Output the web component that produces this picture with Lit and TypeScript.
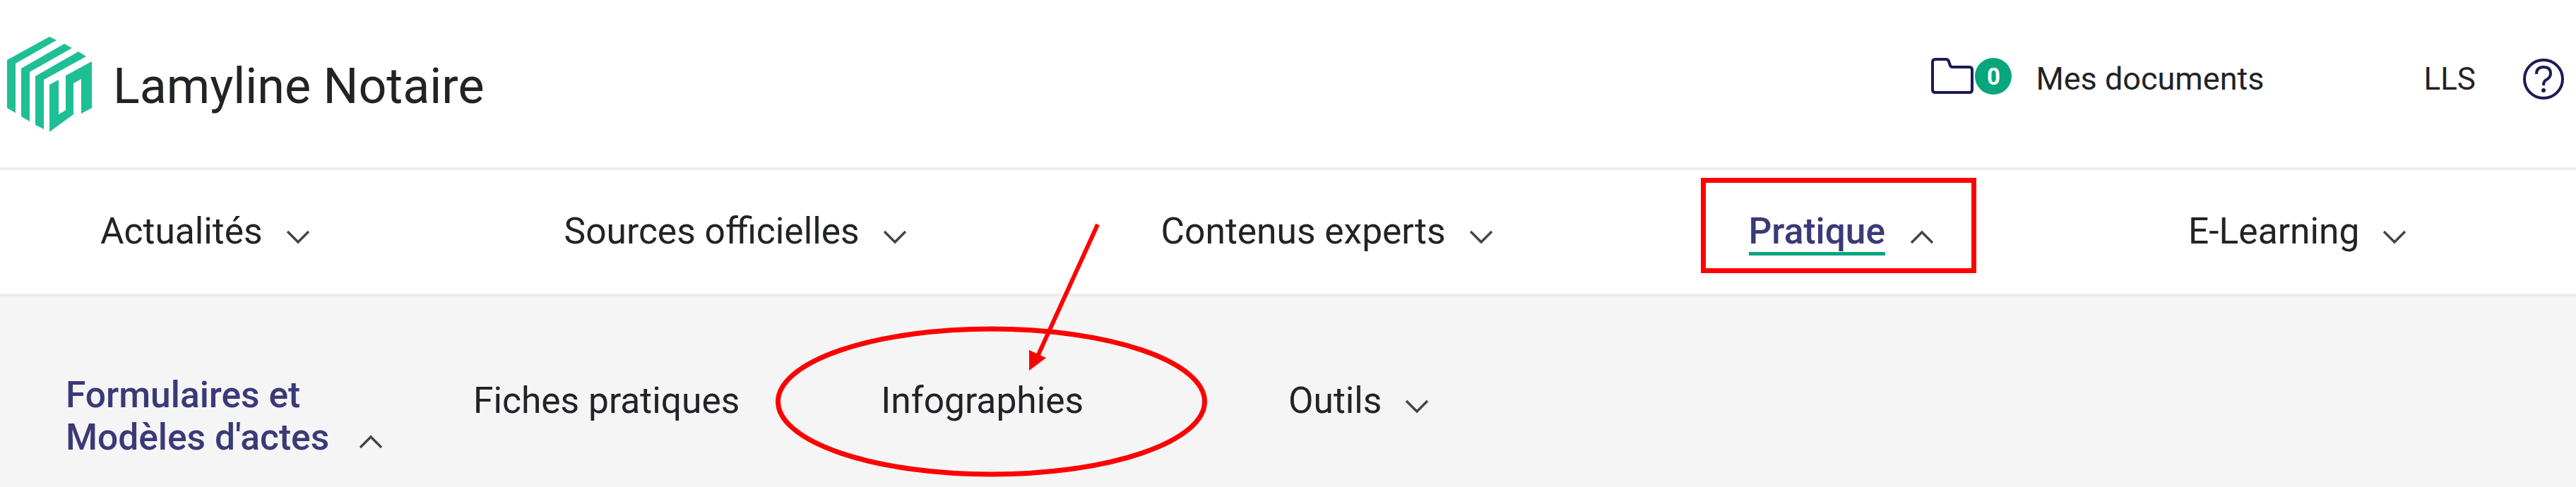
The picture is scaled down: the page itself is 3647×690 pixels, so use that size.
import { LitElement, html, css, svg } from "lit";
import { customElement } from "lit/decorators.js";

const chevron = (up: boolean) => html`<svg class="chev" viewBox="0 0 34 20" aria-hidden="true">
  <path d=${up ? "M2 18 L17 3 L32 18" : "M2 2 L17 17 L32 2"} fill="none" stroke="#444" stroke-width="3.4" />
</svg>`;

const navItems = [
  { label: "Actualités", up: false, active: false },
  { label: "Sources officielles", up: false, active: false },
  { label: "Contenus experts", up: false, active: false },
  { label: "Pratique", up: true, active: true },
  { label: "E-Learning", up: false, active: false },
];

@customElement("app-root")
export class AppRoot extends LitElement {
  static styles = css`
    :host {
      display: block;
      position: relative;
      width: 3647px;
      height: 690px;
      overflow: hidden;
      background: #fff;
      font-family: Roboto, "Liberation Sans", sans-serif;
      color: #222326;
    }
    .top {
      height: 241px;
      box-sizing: border-box;
      display: flex;
      align-items: flex-start;
      border-bottom: 4px solid #eeeeee;
    }
    .logo { display: block; width: 120px; height: 135px; margin: 52px 0 0 10px; flex: none; }
    .brand { font-size: 70px; line-height: 82px; margin: 81px 0 0 30px; }
    .tools { margin-left: auto; display: flex; align-items: flex-start; padding-top: 82px; }
    .folder { display: block; width: 62px; height: 52px; flex: none; }
    .badge {
      width: 52px; height: 52px; border-radius: 50%; background: #07a67c; color: #fff;
      font-size: 33px; font-weight: 700; display: flex; align-items: center; justify-content: center; margin-left: 1px;
    }
    .docs { font-size: 45px; line-height: 52px; margin: 4px 0 0 34px; white-space: nowrap; }
    .user { font-size: 44px; line-height: 52px; margin: 4px 0 0 226px; }
    .help { display: block; width: 60px; height: 60px; margin: 0 16px 0 66px; }
    .nav {
      height: 179px; box-sizing: border-box; border-bottom: 4px solid #ececec;
      display: flex; align-items: flex-start; padding: 57px 0 0 142px; gap: 360px;
    }
    .item { display: flex; align-items: flex-start; font-size: 51.5px; line-height: 60px; flex: none; }
    .label { display: block; white-space: nowrap; }
    .item.active { margin-left: 2px; }
    .item.active .label { color: #3a3a78; font-weight: 500; border-bottom: 5px solid #07a67c; height: 59px; }
    .chev { display: block; width: 34px; height: 20px; margin: 28px 0 0 33px; flex: none; }
    .item.active .chev { margin-left: 35px; }
    .sub {
      height: 270px; background: #f5f5f5;
      display: flex; align-items: flex-start; padding: 0 0 0 93px;
      font-size: 51.5px; line-height: 60px;
    }
    .forms { color: #3a3a78; font-weight: 500; margin-top: 110px; width: 449px; flex: none; white-space: nowrap; }
    .forms .line { display: flex; align-items: flex-start; }
    .forms .chev { margin: 26px 0 0 42px; }
    .link { flex: none; margin-top: 118px; display: flex; align-items: flex-start; white-space: nowrap; }
    .fiches { margin-left: 128px; }
    .info { margin-left: 200px; }
    .outils { margin-left: 290px; }
    .marks { position: absolute; inset: 0; width: 3647px; height: 690px; pointer-events: none; }
  `;

  render() {
    return html`
      <div class="top">
        <svg class="logo" viewBox="10 52 120 135" aria-hidden="true">
          <g fill="#1fbf95">
            <polygon points="70,52 80,57 22,90 22,160 10,153 10,85" />
            <polygon points="91,62 102,68 42,102 42,172 30,165 30,97" />
            <polygon points="111,73 122,80 62,113 62,183 50,177 50,108" />
            <polygon points="130,87 130,153 115,161 115,112 104,118 104,162 70,187 70,120 83,113 83,162 93,156 93,107" />
          </g>
        </svg>
        <div class="brand">Lamyline Notaire</div>
        <div class="tools">
          <svg class="folder" viewBox="0 0 62 52" aria-hidden="true">
            <path d="M3 6 Q3 2 7 2 H22 Q25 2 26 5 L28 11 Q29 13 32 13 H55 Q59 13 59 17 V45 Q59 49 55 49 H7 Q3 49 3 45 Z" fill="none" stroke="#1b1b55" stroke-width="4" />
          </svg>
          <div class="badge">0</div>
          <div class="docs">Mes documents</div>
          <div class="user">LLS</div>
          <svg class="help" viewBox="0 0 60 60" aria-hidden="true">
            <circle cx="30" cy="30" r="27" fill="none" stroke="#1b1b55" stroke-width="4" />
            <path d="M20 23 Q20 13 30 13 Q40 13 40 22 Q40 28 34 31 Q30 33 30 39" fill="none" stroke="#1b1b55" stroke-width="4" />
            <circle cx="30" cy="46" r="3" fill="#1b1b55" />
          </svg>
        </div>
      </div>
      <div class="nav">
        ${navItems.map(
          (n) => html`<div class="item ${n.active ? "active" : ""}"><span class="label">${n.label}</span>${chevron(n.up)}</div>`
        )}
      </div>
      <div class="sub">
        <div class="forms">
          <div>Formulaires et</div>
          <div class="line"><span>Modèles d'actes</span>${chevron(true)}</div>
        </div>
        <div class="link fiches">Fiches pratiques</div>
        <div class="link info">Infographies</div>
        <div class="link outils"><span>Outils</span>${chevron(false)}</div>
      </div>
      <svg class="marks" viewBox="0 0 3647 690" aria-hidden="true">
        ${svg`
          <rect x="2411.5" y="255.5" width="383" height="128" fill="none" stroke="#ff0000" stroke-width="7" />
          <ellipse cx="1403.5" cy="569" rx="302" ry="103" fill="none" stroke="#ff0000" stroke-width="7" />
          <line x1="1554" y1="318" x2="1468" y2="507" stroke="#ff0000" stroke-width="6" />
          <polygon points="1457,525 1457,496 1481,507" fill="#ff0000" />
        `}
      </svg>
    `;
  }
}
